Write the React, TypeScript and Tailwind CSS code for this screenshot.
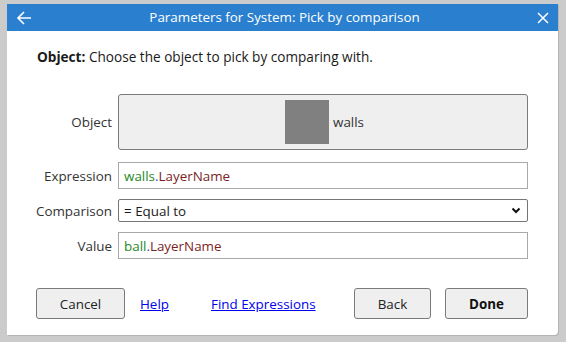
import React from 'react';

const FONT = "font-['Open_Sans','Noto_Sans',sans-serif]";

function ExprText({ obj, prop }: { obj: string; prop: string }) {
  return (
    <span>
      <span className="text-[#1f8a1f]">{obj}</span>
      <span className="text-[#4a4ae0]">.</span>
      <span className="text-[#7a1f1f]">{prop}</span>
    </span>
  );
}

export default function App() {
  return (
    <div className={`w-[566px] h-[342px] bg-[#cbcbcb] pt-[4px] pl-[7px] ${FONT}`}>
      <div className="w-[551px] h-[331px] bg-white rounded-br-[4px] flex flex-col shadow-[1px_1px_0_#b5b5b5]">
        {/* Title bar */}
        <div className="h-[27px] bg-[#2b7fcf] flex items-center justify-between px-[9px] text-white">
          <svg width="16" height="14" viewBox="0 0 16 14" fill="none" stroke="white" strokeWidth="1.6">
            <path d="M15 7H2M8 1L2 7l6 6" />
          </svg>
          <span className="text-[13.4px] leading-none">Parameters for System: Pick by comparison</span>
          <svg width="12" height="12" viewBox="0 0 12 12" fill="none" stroke="white" strokeWidth="1.5">
            <path d="M1 1l10 10M11 1L1 11" />
          </svg>
        </div>

        <p className="mt-[16px] ml-[30px] text-[13.6px] text-[#1a1a1a]">
          <b>Object:</b> Choose the object to pick by comparing with.
        </p>

        <div className="mt-[27px] grid grid-cols-[105px_410px] gap-x-[6px] text-[13.4px] text-[#333]">
          <div className="self-center text-right">Object</div>
          <div className="h-[56px] bg-[#efefef] border border-[#7a7a7a] rounded-[3px] flex items-center gap-[4px] pl-[166px]">
            <div className="w-[44px] h-[44px] bg-[#808080]" />
            <span>walls</span>
          </div>

          <div className="mt-[12px] self-center text-right">Expression</div>
          <div className="mt-[12px] h-[27px] border border-[#a9a9a9] flex items-center px-[5px]">
            <ExprText obj="walls" prop="LayerName" />
          </div>

          <div className="mt-[10px] self-center text-right">Comparison</div>
          <div className="mt-[10px] h-[23px] border border-[#767676] rounded-[2px] flex items-center justify-between pl-[5px] pr-[6px] text-[#1a1a1a]">
            <span>= Equal to</span>
            <svg width="10" height="7" viewBox="0 0 10 7" fill="none" stroke="#111" strokeWidth="2">
              <path d="M1.5 1.5L5 5l3.5-3.5" />
            </svg>
          </div>

          <div className="mt-[10px] self-center text-right">Value</div>
          <div className="mt-[10px] h-[27px] border border-[#a9a9a9] flex items-center px-[5px]">
            <ExprText obj="ball" prop="LayerName" />
          </div>
        </div>

        <div className="mt-[29px] ml-[29px] flex items-center text-[13.4px]">
          <button className="w-[89px] h-[31px] bg-[#efefef] border border-[#7a7a7a] rounded-[3px] text-[#222]">Cancel</button>
          <a className="ml-[15px] text-[#0000ee] underline">Help</a>
          <a className="ml-[42px] text-[#0000ee] underline">Find Expressions</a>
          <button className="ml-auto w-[77px] h-[31px] bg-[#efefef] border border-[#7a7a7a] rounded-[3px] text-[#222]">Back</button>
          <button className="ml-[14px] mr-[30px] w-[83px] h-[31px] bg-[#efefef] border border-[#7a7a7a] rounded-[3px] font-bold text-[#111]">Done</button>
        </div>
      </div>
    </div>
  );
}
